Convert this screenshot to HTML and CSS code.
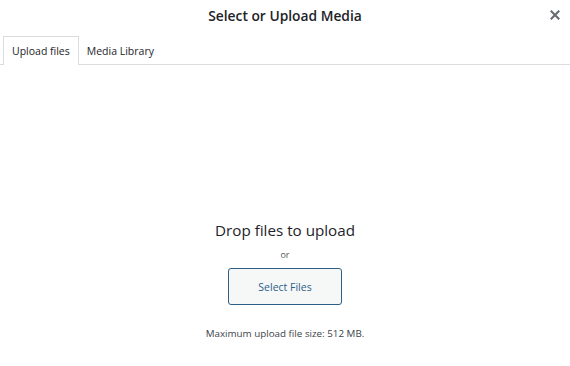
FILE: index.html
```
<!DOCTYPE html>
<html lang="en">
<head>
    <meta charset="UTF-8">
    <meta name="viewport" content="width=device-width, initial-scale=1.0">
    <title>Select or Upload Media</title>
    <link rel="stylesheet" href="styles.css">
</head>
<body>

<div class="modal">
    <div class="modal-header">
        <h1>Select or Upload Media</h1>
        <button class="close" aria-label="Close">
            <svg width="10" height="10" viewBox="0 0 10 10">
                <path d="M1.5 1.5 L8.5 8.5 M8.5 1.5 L1.5 8.5" stroke="#6a6e73" stroke-width="2.2" stroke-linecap="square"/>
            </svg>
        </button>
    </div>

    <div class="tabs">
        <a class="tab active" href="#">Upload files</a>
        <a class="tab" href="#">Media Library</a>
    </div>

    <div class="uploader">
        <h2>Drop files to upload</h2>
        <p class="or">or</p>
        <button class="select-files">Select Files</button>
        <p class="max-size">Maximum upload file size: 512 MB.</p>
    </div>
</div>

</body>
</html>
```

FILE: styles.css
```
body {
    margin: 0;
    font-family: "Open Sans", "Noto Sans", sans-serif;
    background-color: #fff;
    color: #1d2327;
}

.modal {
    width: 570px;
    height: 366px;
    display: flex;
    flex-direction: column;
}

.modal-header {
    height: 30px;
    display: flex;
    align-items: center;
    justify-content: center;
    position: relative;
}

.modal-header h1 {
    margin: 0;
    font-size: 13.8px;
    font-weight: 600;
    color: #1d2327;
}

.close {
    position: absolute;
    right: 10px;
    top: 10px;
    width: 10px;
    height: 10px;
    padding: 0;
    border: none;
    background: none;
    display: flex;
}

.tabs {
    margin-top: 6px;
    height: 28px;
    display: flex;
    align-items: flex-end;
    padding-left: 3px;
    border-bottom: 1px solid #dcdcde;
}

.tab {
    height: 28px;
    box-sizing: border-box;
    padding: 0 8px;
    display: flex;
    align-items: center;
    font-size: 10.5px;
    color: #1d2327;
    text-decoration: none;
    border: 1px solid transparent;
    border-bottom: none;
}

.tab:nth-child(2) {
    padding-left: 7px;
}

.tab.active {
    border-color: #dcdcde;
    background-color: #fff;
    margin-bottom: -1px;
    height: 29px;
}

.uploader {
    flex: 1;
    display: flex;
    flex-direction: column;
    align-items: center;
    padding-top: 155px;
}

.uploader h2 {
    margin: 0;
    font-size: 15.2px;
    font-weight: 400;
    color: #1d2327;
    line-height: 20px;
}

.or {
    margin: 9px 0 0;
    font-size: 9px;
    color: #50575e;
    line-height: 12px;
}

.select-files {
    margin-top: 7px;
    width: 114px;
    height: 37px;
    background-color: #f6f7f7;
    border: 1px solid #2c5f88;
    border-radius: 3px;
    color: #2c5f88;
    font-family: inherit;
    font-size: 10.5px;
}

.max-size {
    margin: 23px 0 0;
    font-size: 9.8px;
    color: #3c434a;
    line-height: 12px;
}
```
